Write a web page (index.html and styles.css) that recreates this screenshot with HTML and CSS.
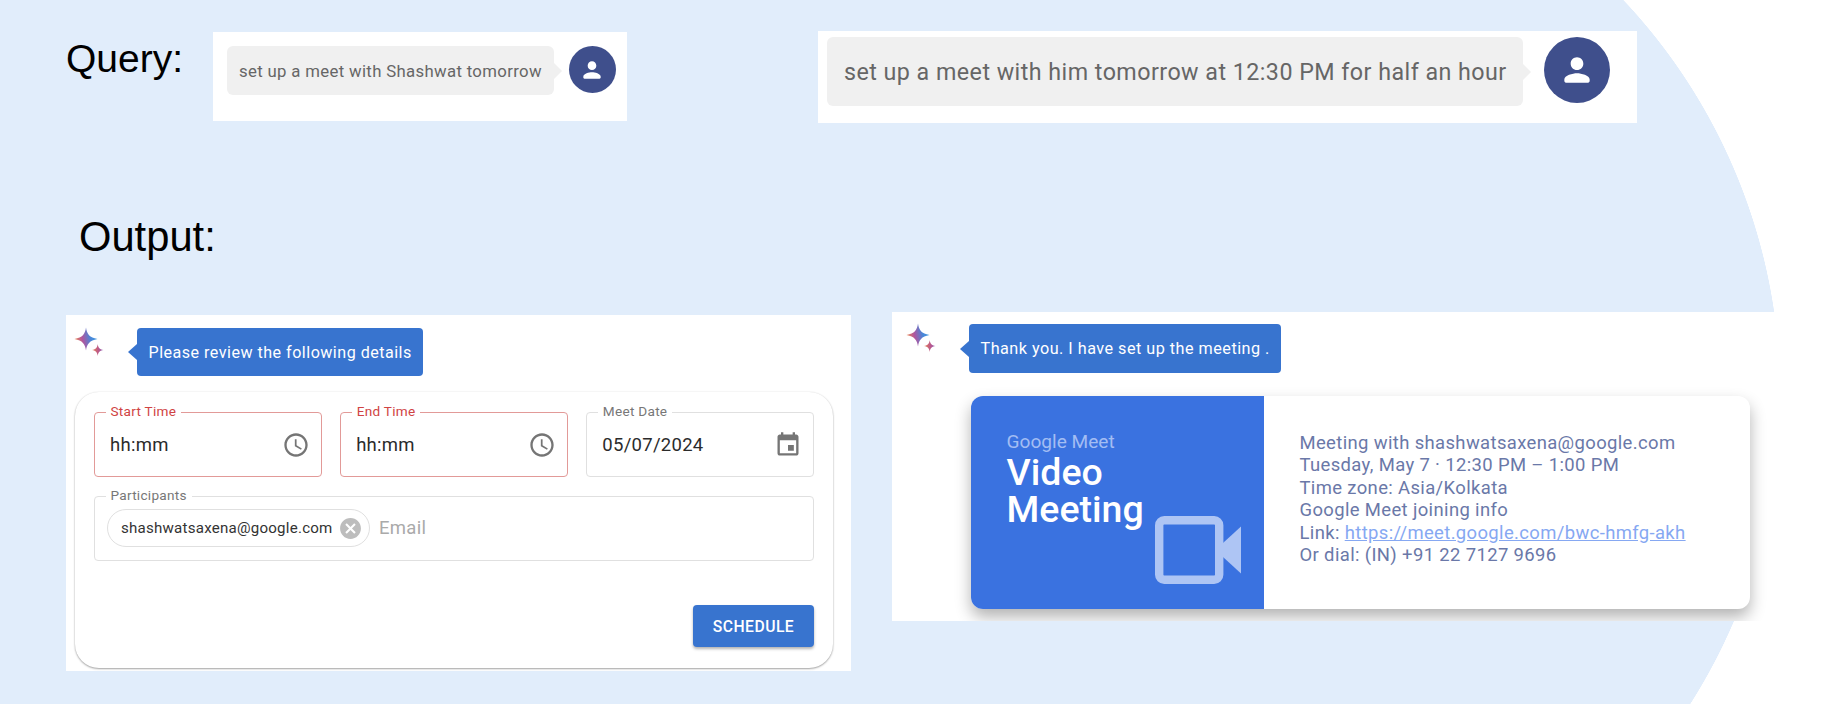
FILE: index.html
```html
<!DOCTYPE html>
<html lang="en">
<head>
    <meta charset="UTF-8">
    <title>Meet scheduling examples</title>
    <link rel="stylesheet" href="styles.css">
</head>
<body>
    <div class="query-row">
        <h2 class="query-label">Query:</h2>

        <div class="user-shot small">
            <div class="user-bubble">set up a meet with Shashwat tomorrow</div>
            <div class="avatar">
                <svg viewBox="0 0 24 24"><path d="M12 12c2.21 0 4-1.79 4-4s-1.79-4-4-4-4 1.79-4 4 1.79 4 4 4zm0 2c-2.67 0-8 1.34-8 4v1c0 .55.45 1 1 1h14c.55 0 1-.45 1-1v-1c0-2.66-5.33-4-8-4z"/></svg>
            </div>
        </div>

        <div class="user-shot large">
            <div class="user-bubble">set up a meet with him tomorrow at 12:30 PM for half an hour</div>
            <div class="avatar">
                <svg viewBox="0 0 24 24"><path d="M12 12c2.21 0 4-1.79 4-4s-1.79-4-4-4-4 1.79-4 4 1.79 4 4 4zm0 2c-2.67 0-8 1.34-8 4v1c0 .55.45 1 1 1h14c.55 0 1-.45 1-1v-1c0-2.66-5.33-4-8-4z"/></svg>
            </div>
        </div>
    </div>

    <h2 class="output-label">Output:</h2>

    <div class="output-row">

        <!-- first answer: the form -->
        <div class="panel form-panel">
            <div class="assist-row">
                <svg class="spark" viewBox="0 0 32 32">
                    <defs>
                        <linearGradient id="sparkA" x1="0" y1="0.6" x2="1" y2="0.4">
                            <stop offset="0" stop-color="#f08a4b"/>
                            <stop offset="0.35" stop-color="#b0569f"/>
                            <stop offset="0.7" stop-color="#4a86d8"/>
                            <stop offset="1" stop-color="#3f9ae0"/>
                        </linearGradient>
                        <linearGradient id="sparkB" x1="0" y1="0.5" x2="1" y2="0.5">
                            <stop offset="0" stop-color="#e8804f"/>
                            <stop offset="0.6" stop-color="#b8568f"/>
                            <stop offset="1" stop-color="#8a68b8"/>
                        </linearGradient>
                    </defs>
                    <path fill="url(#sparkA)" d="M14 1.500C14.800 8 17.500 11.500 25.500 13C17.500 14.500 14.800 18 14 24.500C13.200 18 10.500 14.500 2.500 13C10.500 11.500 13.200 8 14 1.500Z"/>
                    <path fill="url(#sparkB)" d="M25.700 18C26.100 21.500 27.400 23.200 31.500 24C27.400 24.800 26.100 26.500 25.700 30C25.300 26.500 24 24.800 20 24C24 23.200 25.300 21.500 25.700 18Z"/>
                </svg>
                <div class="assist-bubble">Please review the following details</div>
            </div>

            <div class="form-card">
                <div class="form-grid">
                    <div class="field error">
                        <span class="field-label">Start Time</span>
                        <span class="field-value">hh:mm</span>
                        <svg class="field-icon" viewBox="0 0 24 24"><path d="M11.99 2C6.47 2 2 6.48 2 12s4.47 10 9.99 10C17.52 22 22 17.52 22 12S17.52 2 11.99 2zM12 20c-4.42 0-8-3.58-8-8s3.58-8 8-8 8 3.58 8 8-3.58 8-8 8zm.5-13H11v6l5.25 3.15.75-1.23-4.5-2.67z"/></svg>
                    </div>
                    <div class="field error">
                        <span class="field-label">End Time</span>
                        <span class="field-value">hh:mm</span>
                        <svg class="field-icon" viewBox="0 0 24 24"><path d="M11.99 2C6.47 2 2 6.48 2 12s4.47 10 9.99 10C17.52 22 22 17.52 22 12S17.52 2 11.99 2zM12 20c-4.42 0-8-3.58-8-8s3.58-8 8-8 8 3.58 8 8-3.58 8-8 8zm.5-13H11v6l5.25 3.15.75-1.23-4.5-2.67z"/></svg>
                    </div>
                    <div class="field">
                        <span class="field-label">Meet Date</span>
                        <span class="field-value">05/07/2024</span>
                        <svg class="field-icon" viewBox="0 0 24 24"><path d="M17 12h-5v5h5v-5zM16 1v2H8V1H6v2H5c-1.11 0-1.99.9-1.99 2L3 19c0 1.1.89 2 2 2h14c1.1 0 2-.9 2-2V5c0-1.1-.9-2-2-2h-1V1h-2zm3 18H5V8h14v11z"/></svg>
                    </div>
                    <div class="field wide">
                        <span class="field-label">Participants</span>
                        <div class="chip">
                            <span class="chip-text">shashwatsaxena@google.com</span>
                            <svg class="chip-close" viewBox="0 0 24 24"><path d="M12 2C6.47 2 2 6.47 2 12s4.47 10 10 10 10-4.47 10-10S17.53 2 12 2zm5 13.59L15.59 17 12 13.41 8.41 17 7 15.59 10.59 12 7 8.41 8.41 7 12 10.59 15.59 7 17 8.41 13.41 12 17 15.59z"/></svg>
                        </div>
                        <span class="placeholder">Email</span>
                    </div>
                </div>
                <div class="form-actions">
                    <button class="schedule-btn">SCHEDULE</button>
                </div>
            </div>
        </div>

        <!-- second answer: the meeting card -->
        <div class="panel meet-panel">
            <div class="assist-row">
                <svg class="spark" viewBox="0 0 32 32">
                    <defs>
                        <linearGradient id="sparkC" x1="0" y1="0.6" x2="1" y2="0.4">
                            <stop offset="0" stop-color="#f08a4b"/>
                            <stop offset="0.35" stop-color="#b0569f"/>
                            <stop offset="0.7" stop-color="#4a86d8"/>
                            <stop offset="1" stop-color="#3f9ae0"/>
                        </linearGradient>
                        <linearGradient id="sparkD" x1="0" y1="0.5" x2="1" y2="0.5">
                            <stop offset="0" stop-color="#e8804f"/>
                            <stop offset="0.6" stop-color="#b8568f"/>
                            <stop offset="1" stop-color="#8a68b8"/>
                        </linearGradient>
                    </defs>
                    <path fill="url(#sparkC)" d="M14 1.500C14.800 8 17.500 11.500 25.500 13C17.500 14.500 14.800 18 14 24.500C13.200 18 10.500 14.500 2.500 13C10.500 11.500 13.200 8 14 1.500Z"/>
                    <path fill="url(#sparkD)" d="M25.700 18C26.100 21.500 27.400 23.200 31.500 24C27.400 24.800 26.100 26.500 25.700 30C25.300 26.500 24 24.800 20 24C24 23.200 25.300 21.500 25.700 18Z"/>
                </svg>
                <div class="assist-bubble">Thank you. I have set up the meeting .</div>
            </div>

            <div class="meet-card">
                <div class="meet-side">
                    <div class="meet-brand">Google Meet</div>
                    <div class="meet-title">Video<br>Meeting</div>
                    <svg class="meet-camera" viewBox="0 0 86 68">
                        <rect x="4.2" y="4.2" width="60" height="59.6" rx="5" fill="none" stroke="#aec5f4" stroke-width="8.4"/>
                        <path fill="#aec5f4" d="M68 27L86 10.500V57.500L68 41Z"/>
                    </svg>
                </div>
                <div class="meet-info">
                    <div>Meeting with shashwatsaxena@google.com</div>
                    <div>Tuesday, May 7 · 12:30 PM – 1:00 PM</div>
                    <div>Time zone: Asia/Kolkata</div>
                    <div>Google Meet joining info</div>
                    <div>Link: <a href="#">https://meet.google.com/bwc-hmfg-akh</a></div>
                    <div>Or dial: (IN) +91 22 7127 9696</div>
                </div>
            </div>
        </div>
    </div>
</body>
</html>
```

FILE: styles.css
```css
* { box-sizing: border-box; }

html, body { margin: 0; padding: 0; }

body {
    width: 1842px;
    height: 704px;
    overflow: hidden;
    font-family: Roboto, sans-serif;
    background-color: #fff;
    background-image:
        radial-gradient(circle 576px at 1204.5px 395px, #e1edfb 99.9%, transparent 100%),
        linear-gradient(#e1edfb, #e1edfb);
    background-size: 100% 100%, 1205px 100%;
    background-repeat: no-repeat;
}

/* headings */
.query-label, .output-label {
    margin: 0;
    font-family: "Liberation Sans", Arial, sans-serif;
    font-weight: 400;
    color: #000;
}
.query-label {
    width: 147px;
    margin-top: 5px;
    font-size: 39px;
    line-height: 46px;
}
.output-label {
    margin: 91px 0 0 79px;
    font-size: 41.7px;
    line-height: 48px;
}

/* top row */
.query-row {
    display: flex;
    align-items: flex-start;
    height: 122px;
    padding: 31px 0 0 66px;
}
.user-shot {
    display: flex;
    align-items: flex-start;
    background: #fff;
}
.user-shot.small {
    width: 414px;
    height: 89px;
    margin-top: 1px;
    padding: 14px 0 0 14px;
    gap: 14.500px;
}
.user-shot.large {
    width: 819px;
    height: 92px;
    margin-left: 191px;
    padding: 6px 0 0 9px;
    gap: 21px;
}
.user-bubble {
    position: relative;
    display: flex;
    align-items: center;
    background: #f0f0f0;
    border-radius: 6px;
    color: #666;
    white-space: nowrap;
}
.user-bubble::after {
    content: "";
    position: absolute;
    top: 50%;
    left: 100%;
    margin-top: -8px;
    border-style: solid;
    border-width: 8px 0 8px 8px;
    border-color: transparent transparent transparent #f0f0f0;
}
.small .user-bubble {
    width: 327px;
    height: 49px;
    padding-left: 12px;
    font-size: 16.75px;
    letter-spacing: 0.02em;
}
.large .user-bubble {
    width: 696px;
    height: 69px;
    padding-left: 17px;
    font-size: 23.25px;
    letter-spacing: 0.02em;
}
.avatar {
    display: flex;
    align-items: center;
    justify-content: center;
    background: #3f4f8c;
    border-radius: 50%;
    flex: none;
}
.avatar svg { fill: #fff; }
.small .avatar { width: 47px; height: 47px; }
.small .avatar svg { width: 26px; height: 26px; }
.large .avatar { width: 66px; height: 66px; }
.large .avatar svg { width: 38px; height: 38px; }

/* bottom row */
.output-row {
    display: flex;
    align-items: flex-start;
    margin-top: 51px;
    padding-left: 66px;
}
.panel {
    background: #fff;
    overflow: hidden;
}
.form-panel {
    width: 785px;
    height: 356px;
    margin-top: 3px;
    padding: 13px 0 0 6px;
}
.meet-panel {
    width: 889px;
    height: 309px;
    margin-left: 41px;
    padding: 12px 0 0 12px;
}

.assist-row {
    display: flex;
    align-items: flex-start;
}
.spark {
    width: 32px;
    height: 32px;
    margin-top: -2px;
    flex: none;
}
.assist-bubble {
    position: relative;
    display: flex;
    align-items: center;
    width: 286px;
    height: 48px;
    margin-left: 33px;
    padding-left: 11.500px;
    background: #3874cf;
    border-radius: 4px;
    color: #fff;
    font-size: 16.1px;
    letter-spacing: 0.03em;
    white-space: nowrap;
}
.assist-bubble::before {
    content: "";
    position: absolute;
    top: 50%;
    right: 100%;
    margin-top: -8px;
    border-style: solid;
    border-width: 8px 9px 8px 0;
    border-color: transparent #3874cf transparent transparent;
}
.meet-panel .assist-bubble {
    width: 312px;
    height: 49px;
    font-size: 16.2px;
}

/* form card */
.form-card {
    width: 758px;
    height: 276px;
    margin: 16px 0 0 3px;
    padding: 20px 19px;
    background: #fff;
    border-radius: 24px;
    box-shadow: 0 1px 2px rgba(0, 0, 0, 0.35), 0 0 2px rgba(0, 0, 0, 0.08);
}
.form-grid {
    display: grid;
    grid-template-columns: repeat(3, 1fr);
    gap: 18.500px;
}
.field {
    position: relative;
    display: flex;
    align-items: center;
    height: 65px;
    padding: 0 11px 0 15px;
    border: 1px solid #e0e0e0;
    border-radius: 4px;
    color: #2b2b2b;
    font-size: 18.5px;
    letter-spacing: 0.015em;
}
.field.error { border-color: #e29a98; }
.field.wide {
    grid-column: 1 / 4;
    padding-left: 12px;
}
.field-label {
    position: absolute;
    top: -10px;
    left: 10.500px;
    padding: 0 5px;
    background: #fff;
    color: #777;
    font-size: 13.6px;
    line-height: 16px;
    letter-spacing: 0.02em;
}
.field.error .field-label { color: #d04343; }
.field-icon {
    width: 28px;
    height: 28px;
    margin-left: auto;
    fill: #757575;
}

.chip {
    display: flex;
    align-items: center;
    width: 263px;
    height: 38px;
    padding: 0 6px 0 13px;
    border: 1px solid #e0e0e0;
    border-radius: 19px;
    color: #333;
    font-size: 15.1px;
    letter-spacing: 0.015em;
}
.chip-close {
    width: 25px;
    height: 25px;
    margin-left: auto;
    fill: #bdbdbd;
}
.placeholder {
    margin-left: 9px;
    color: #aaa;
}

.form-actions {
    display: flex;
    justify-content: flex-end;
    margin-top: 44.500px;
}
.schedule-btn {
    width: 121px;
    height: 42px;
    padding: 0;
    border: 0;
    border-radius: 4px;
    background: #3874cf;
    color: #fff;
    font-family: Roboto, sans-serif;
    font-size: 15.7px;
    font-weight: 500;
    letter-spacing: 0.03em;
    box-shadow: 0 2px 3px rgba(0, 0, 0, 0.3);
}

/* meeting card */
.meet-card {
    display: flex;
    width: 779px;
    height: 212.500px;
    margin: 23px 0 0 67px;
    background: #fff;
    border-radius: 12px;
    box-shadow: 0 8px 16px rgba(0, 0, 0, 0.3);
    overflow: hidden;
}
.meet-side {
    position: relative;
    width: 293px;
    flex: none;
    padding: 35px 0 0 35.500px;
    background: #3a72e0;
    color: #fff;
}
.meet-brand {
    color: #a3bdf3;
    font-size: 19.1px;
    line-height: 22px;
}
.meet-title {
    margin-top: 1px;
    font-size: 37.5px;
    font-weight: 500;
    line-height: 37px;
}
.meet-camera {
    position: absolute;
    right: 23px;
    bottom: 25px;
    width: 86px;
    height: 68px;
}
.meet-info {
    padding: 36px 0 0 35.500px;
    color: #6a78a8;
    font-size: 18.45px;
    line-height: 22.4px;
    letter-spacing: 0.02em;
}
.meet-info a { color: #86a8f2; }
```
